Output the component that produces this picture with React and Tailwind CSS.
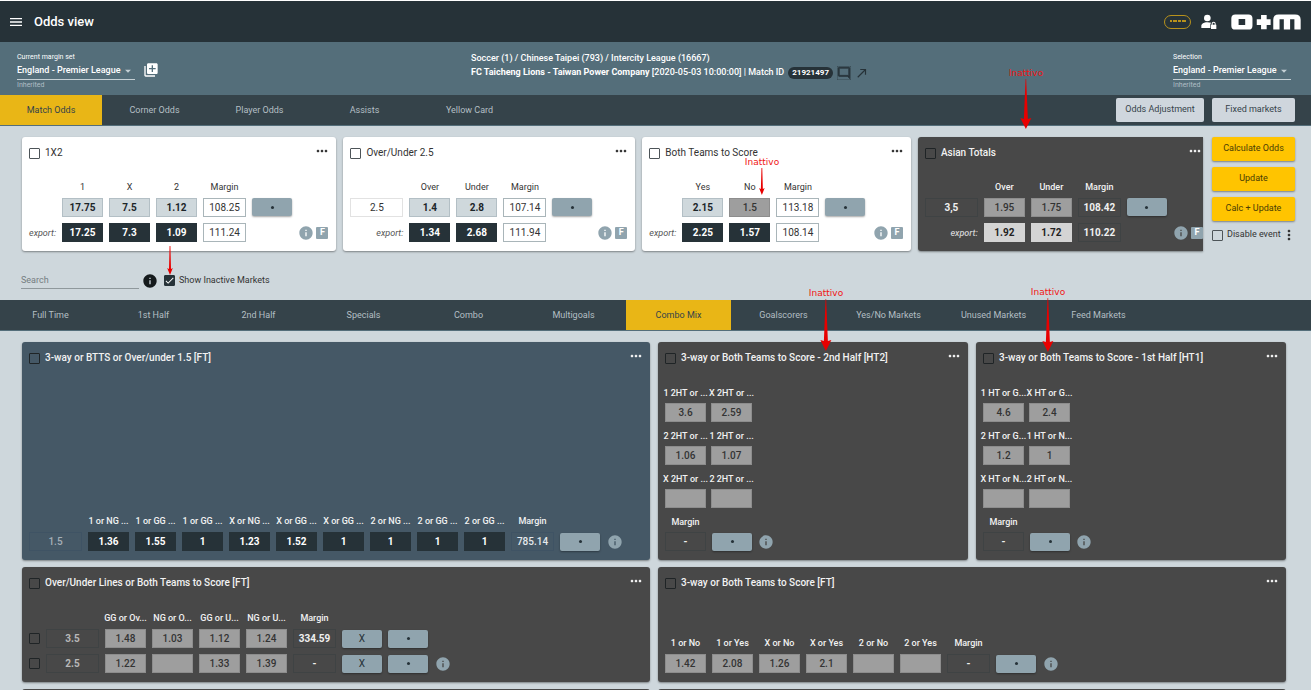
import React, { useState } from "react";
import {
  MdMenu,
  MdLibraryAdd,
  MdArrowDropDown,
  MdOutlineModeComment,
  MdCallMade,
  MdMoreHoriz,
  MdMoreVert,
  MdInfo,
  MdCheck,
} from "react-icons/md";

const CELL = {
  light: "border-[#b3bfc5] bg-[#cfd8dc] font-bold text-[#1c2529]",
  navy: "border-[#263238] bg-[#263238] font-bold text-white",
  grey: "border-[#8d8d8d] bg-[#9e9e9e] font-medium text-[#333333]",
  pale: "border-[#d4d4d4] bg-[#d4d4d4] font-bold text-[#222222]",
  white: "border-[#a9b5b9] bg-white text-[#333333]",
  line: "border-[#e2e2e2] bg-white text-[#333333]",
  dark: "border-[#3f4344] bg-transparent font-bold text-[#f0f0f0]",
  dim: "border-[#3f4344] bg-transparent font-bold text-[#b8b8b8]",
  blue: "border-[#3f5364] bg-transparent font-medium text-[#e6eaed]",
  blueDim: "border-[#3f5364] bg-transparent font-medium text-[#a5b0b8]",
};

function Cell({ value, tone, width = "w-[41px]", label }) {
  return (
    <input
      aria-label={label}
      defaultValue={value}
      className={`block h-[19px] border text-center text-[10px] leading-4 outline-none ${width} ${CELL[tone]}`}
    />
  );
}

function Check({ id, label, dark, defaultChecked = false }) {
  const [on, setOn] = useState(defaultChecked);
  return (
    <span className="relative flex size-[11px] shrink-0">
      <input
        id={id}
        type="checkbox"
        aria-label={label}
        checked={on}
        onChange={(e) => setOn(e.target.checked)}
        className={`size-[11px] appearance-none rounded-[1px] border checked:bg-[#263238] ${
          dark ? "border-[#1f2426]" : "border-[#4d5458] checked:border-[#263238]"
        }`}
      />
      {on && <MdCheck className="pointer-events-none absolute inset-0 size-[11px] text-white" />}
    </span>
  );
}

function ActionButton({ children }) {
  return (
    <button className="flex h-[18px] w-10 items-center justify-center rounded-[2px] bg-[#90a4ae] text-[10px] text-[#263238] shadow-[0_1px_2px_rgba(0,0,0,0.35)]">
      {children === "•" ? <span className="size-[3px] rounded-full bg-[#263238]" /> : children}
    </button>
  );
}

function InfoIcon() {
  return <MdInfo className="size-4 shrink-0 text-[#90a4ae]" />;
}

function FBadge() {
  return (
    <span className="flex size-3 shrink-0 items-center justify-center rounded-[1px] bg-[#90a4ae] text-[9px] font-bold text-white">
      F
    </span>
  );
}

function Card({ title, tone = "dark", clipped, className = "", children }) {
  const tones = {
    white: "bg-white text-[#333333]",
    dark: "bg-[#484848] text-[#f2f2f2]",
    blue: "bg-[#455866] text-[#f2f2f2]",
  };
  return (
    <section
      className={`flex min-w-0 flex-col justify-between overflow-hidden pb-[9px] pl-[7px] shadow-[0_1px_2px_rgba(0,0,0,0.4)] ${
        clipped ? "rounded-l-[3px]" : "rounded-[3px]"
      } ${tones[tone]} ${className}`}
    >
      <header className={`flex h-8 shrink-0 items-center gap-[5px] ${clipped ? "" : "pr-1.5"}`}>
        <Check label={title} dark={tone !== "white"} />
        <h2 className={`flex-1 whitespace-nowrap text-[10px] leading-4 ${tone === "white" ? "" : "font-medium"}`}>
          {title}
        </h2>
        <button aria-label={`${title} menu`} className="mb-1">
          <MdMoreHoriz className="size-4" />
        </button>
      </header>
      {children}
    </section>
  );
}

const TH = "h-[22px] p-0 pr-1.5 pb-[3px] align-bottom text-[9px] leading-4";

function TopMarket({ title, tone = "white", clipped, line, heads, odds, exported, margin, exportMargin, oddTones, className }) {
  const dark = tone === "dark";
  const marginTone = dark ? "dark" : "white";
  const weight = dark ? "font-medium" : "font-normal";
  return (
    <Card title={title} tone={tone} clipped={clipped} className={className}>
      <div className={`flex items-end justify-between ${clipped ? "" : "pr-2"}`}>
        <table className={`shrink-0 border-collapse text-center text-[9px] leading-4 ${weight}`}>
          <thead>
            <tr>
              <th className="p-0" />
              {heads.map((h) => (
                <th key={h} className={`${TH} ${weight}`}>{h}</th>
              ))}
              <th className={`${TH} ${weight}`}>Margin</th>
              <th className="p-0" />
            </tr>
          </thead>
          <tbody>
            <tr>
              <td className="p-0 pr-1.5 pb-1.5">
                {line !== undefined && (
                  <Cell value={line} label={`${title} line`} tone={dark ? "dark" : "line"} width="w-[53px]" />
                )}
              </td>
              {odds.map((v, i) => (
                <td key={i} className="p-0 pr-1.5 pb-1.5">
                  <Cell value={v} label={`${title} ${heads[i]}`} tone={oddTones[i]} />
                </td>
              ))}
              <td className="p-0 pr-1.5 pb-1.5">
                <Cell value={margin} label={`${title} margin`} tone={marginTone} width="w-[43px]" />
              </td>
              <td className="p-0 pb-[7px]">
                <ActionButton>•</ActionButton>
              </td>
            </tr>
            <tr>
              <td className={`p-0 pr-1.5 text-right italic ${dark ? "text-[#d0d0d0]" : "text-[#555555]"}`}>export:</td>
              {exported.map((v, i) => (
                <td key={i} className="p-0 pr-1.5">
                  <Cell value={v} label={`${title} ${heads[i]} export`} tone={dark ? "pale" : "navy"} />
                </td>
              ))}
              <td className="p-0 pr-1.5">
                <Cell value={exportMargin} label={`${title} export margin`} tone={marginTone} width="w-[43px]" />
              </td>
              <td />
            </tr>
          </tbody>
        </table>
        <div className="flex h-[19px] items-center gap-0.5">
          <InfoIcon />
          <FBadge />
        </div>
      </div>
    </Card>
  );
}

function LineMarket({ title, tone = "dark", cellTone = "grey", heads, rows, selectable, className }) {
  const blue = tone === "blue";
  const hasLine = rows[0].line !== undefined;
  return (
    <Card title={title} tone={tone} className={className}>
      <div className="flex items-end gap-px">
        <table className="border-collapse text-center">
          <thead>
            <tr>
              {selectable && <th className="p-0" />}
              {hasLine && <th className="p-0" />}
              {heads.map((h, i) => (
                <th key={i} className={`${TH} font-medium`}>
                  <span className="flex w-[41px] justify-center whitespace-nowrap">{h}</span>
                </th>
              ))}
              <th className={`${TH} font-medium`}>Margin</th>
            </tr>
          </thead>
          <tbody>
            {rows.map((r, n) => {
              const pb = n < rows.length - 1 ? "pb-1.5" : "pb-0";
              return (
                <tr key={n}>
                  {selectable && (
                    <td className={`p-0 pr-1.5 ${pb}`}>
                      <Check label={`${title} ${r.line}`} dark />
                    </td>
                  )}
                  {hasLine && (
                    <td className={`p-0 pr-1.5 ${pb}`}>
                      <Cell value={r.line} label={`${title} line`} tone={blue ? "blueDim" : "dim"} width="w-[53px]" />
                    </td>
                  )}
                  {r.odds.map((v, i) => (
                    <td key={i} className={`p-0 pr-1.5 ${pb}`}>
                      <Cell value={v} label={`${title} ${heads[i]}`} tone={cellTone} />
                    </td>
                  ))}
                  <td className={`p-0 pr-1.5 ${pb}`}>
                    <Cell value={r.margin} label={`${title} margin`} tone={blue ? "blue" : "dark"} width="w-[43px]" />
                  </td>
                  {r.actions.map((a) => (
                    <td key={a} className={`p-0 pr-1.5 ${pb}`}>
                      <ActionButton>{a}</ActionButton>
                    </td>
                  ))}
                </tr>
              );
            })}
          </tbody>
        </table>
        <div className="flex h-[19px] items-center">
          <InfoIcon />
        </div>
      </div>
    </Card>
  );
}

function PairMarket({ title, pairs }) {
  return (
    <Card title={title}>
      <div className="flex flex-col text-[9px] leading-4 font-medium">
        <div className="grid grid-cols-[41px_41px] gap-x-[5px]">
          {pairs.map(([name, value]) => (
            <label key={name} className="flex flex-col">
              <span className="flex h-6 items-center justify-center pt-1 whitespace-nowrap">{name}</span>
              <Cell value={value} label={name} tone="grey" />
            </label>
          ))}
        </div>
        <span className="flex h-6 w-[41px] items-center justify-center pt-1">Margin</span>
        <div className="flex items-center">
          <Cell value="-" label={`${title} margin`} tone="dark" />
          <div className="mr-1.5 ml-1.5">
            <ActionButton>•</ActionButton>
          </div>
          <InfoIcon />
        </div>
      </div>
    </Card>
  );
}

function Tabs({ items, initial, firstWidth, label, children }) {
  const [active, setActive] = useState(initial);
  return (
    <nav aria-label={label} className="flex h-[31px] shrink-0 items-center border-b border-[#546e7a] bg-[#35434a]">
      {items.map((t, i) => (
        <button
          key={t}
          onClick={() => setActive(t)}
          className={`h-full shrink-0 pt-0.5 text-[9px] ${i === 0 ? firstWidth : "w-[105px]"} ${
            active === t ? "bg-[#e9b616] text-[#35434a]" : "text-[#b4bfc4]"
          }`}
        >
          {t}
        </button>
      ))}
      {children}
    </nav>
  );
}

function MarginSelect({ id, label }) {
  return (
    <div className="flex w-[118px] flex-col text-white">
      <label htmlFor={id} className="text-[7px] leading-[10px]">{label}</label>
      <div className="relative flex items-center border-b border-[#c5d0d5]">
        <select id={id} className="h-[17px] w-full appearance-none bg-transparent text-[9px] font-medium outline-none">
          <option>England - Premier League</option>
        </select>
        <MdArrowDropDown className="pointer-events-none absolute right-0 size-3.5 text-[#c5d0d5]" />
      </div>
      <span className="text-[7px] leading-[11px] text-[#b0bec5]">Inherited</span>
    </div>
  );
}

function Logo() {
  return (
    <svg viewBox="752 42 212 48" className="h-4 w-[70px]" fill="#ffffff" aria-label="o+m">
      <path
        fillRule="evenodd"
        d="M765 43H805Q817 43 817 55V77Q817 89 805 89H765Q753 89 753 77V55Q753 43 765 43ZM775 57V75H795V57Z"
      />
      <path d="M843 45H860V58H872V75H860V88H843V75H830V58H843Z" />
      <path d="M880 89V59Q880 43 896 43H946Q963 43 963 59V89H944V58H931V89H912V58H899V89Z" />
    </svg>
  );
}

function UserLock() {
  return (
    <svg viewBox="0 0 48 48" className="h-4 w-4" fill="#ffffff" aria-label="Account">
      <circle cx="19" cy="12" r="10" />
      <path d="M19 25C8 25 1 30 1 36V42H28V31Q28 28 31 26Q25 25 19 25Z" />
      <path fillRule="evenodd" d="M32 32V29A6 6 0 0 1 44 29V32H46V45H30V32ZM35 32H41V29A3 3 0 0 0 35 29Z" />
    </svg>
  );
}

function Note({ className, arrowOnly, length }) {
  return (
    <div className={`pointer-events-none absolute z-10 flex -translate-x-1/2 flex-col items-center ${className}`}>
      {!arrowOnly && (
        <span className="font-['DejaVu_Sans',sans-serif] text-[9px] leading-3 text-[#f01414]">Inattivo</span>
      )}
      <svg width="14" height={length} viewBox={`0 0 14 ${length}`} fill="#e80000">
        <path
          d={
            length > 40
              ? `M6.7 0H7.3L9 ${length - 10}L12.5 ${length - 11}L7 ${length}L1.5 ${length - 11}L5 ${length - 10}Z`
              : `M6.6 0H7.4L8 ${length - 6}L9.8 ${length - 7}L7 ${length}L4.2 ${length - 7}L6 ${length - 6}Z`
          }
        />
      </svg>
    </div>
  );
}

export default function App() {
  return (
    <div className="relative flex h-screen flex-col overflow-hidden border-t border-white bg-[#ced7dc] font-[Roboto,'Liberation_Sans',sans-serif] text-[#333333]">
      <header className="flex h-[41px] shrink-0 items-center bg-[#263238] pr-2.5 pl-2 text-white">
        <button aria-label="Menu">
          <MdMenu className="size-4" />
        </button>
        <h1 className="ml-2.5 flex-1 text-[13px] font-medium">Odds view</h1>
        <div className="flex h-3.5 w-[27px] justify-center gap-px rounded-full border border-[#b8921c] pt-1">
          <span className="h-0.5 w-0.5 bg-[#b8921c]" />
          <span className="h-0.5 w-1 bg-[#b8921c]" />
          <span className="h-0.5 w-[3px] bg-[#b8921c]" />
          <span className="h-0.5 w-1 bg-[#b8921c]" />
        </div>
        <div className="mr-3.5 ml-2.5">
          <UserLock />
        </div>
        <Logo />
      </header>

      <div className="flex h-[53px] shrink-0 items-start bg-[#546e7a] pt-2.5 pr-5 pl-[17px]">
        <div className="flex w-[454px] items-start gap-2">
          <MarginSelect id="margin-set" label="Current margin set" />
          <button aria-label="Add margin set" className="mt-2.5 text-white">
            <MdLibraryAdd className="size-4" />
          </button>
        </div>
        <div className="flex flex-1 flex-col text-[9px] font-medium text-white">
          <p className="leading-3">Soccer (1) / Chinese Taipei (793) / Intercity League (16667)</p>
          <div className="mt-px flex h-4 items-center">
            <p>
              <strong className="font-bold">FC Taicheng Lions - Taiwan Power Company</strong> [2020-05-03 10:00:00] | Match ID
            </p>
            <span className="ml-1 flex h-3 items-center rounded-full bg-[#263238] px-1 text-[8px] font-bold">21921497</span>
            <MdOutlineModeComment className="ml-1 size-3.5 stroke-[#263238] stroke-1 text-[#263238]" />
            <MdCallMade className="ml-1 size-3.5 text-[#263238]" />
          </div>
        </div>
        <MarginSelect id="selection" label="Selection" />
      </div>

      <Tabs
        label="Match sections"
        items={["Match Odds", "Corner Odds", "Player Odds", "Assists", "Yellow Card"]}
        initial="Match Odds"
        firstWidth="w-[102px]"
      >
        <div className="ml-auto flex gap-2 pr-4 text-[9px] text-[#35434a]">
          <button className="h-6 w-[88px] rounded-[2px] bg-[#cfd6dd]">Odds Adjustment</button>
          <button className="h-6 w-[83px] rounded-[2px] bg-[#cfd6dd]">Fixed markets</button>
        </div>
      </Tabs>

      <div className="flex shrink-0 gap-[9px] pt-[11px] pr-4 pl-[22px]">
        <div className="flex h-[114px] min-w-0 flex-1 gap-[7px]">
          <TopMarket
            className="flex-[315_1_0px]"
            title="1X2"
            heads={["1", "X", "2"]}
            odds={["17.75", "7.5", "1.12"]}
            oddTones={["light", "light", "light"]}
            exported={["17.25", "7.3", "1.09"]}
            margin="108.25"
            exportMargin="111.24"
          />
          <TopMarket
            className="flex-[292_1_0px]"
            title="Over/Under 2.5"
            line="2.5"
            heads={["Over", "Under"]}
            odds={["1.4", "2.8"]}
            oddTones={["light", "light"]}
            exported={["1.34", "2.68"]}
            margin="107.14"
            exportMargin="111.94"
          />
          <TopMarket
            className="flex-[268_1_0px]"
            title="Both Teams to Score"
            heads={["Yes", "No"]}
            odds={["2.15", "1.5"]}
            oddTones={["light", "grey"]}
            exported={["2.25", "1.57"]}
            margin="113.18"
            exportMargin="108.14"
          />
          <TopMarket
            className="flex-[285_1_0px]"
            title="Asian Totals"
            tone="dark"
            clipped
            line="3,5"
            heads={["Over", "Under"]}
            odds={["1.95", "1.75"]}
            oddTones={["grey", "grey"]}
            exported={["1.92", "1.72"]}
            margin="108.42"
            exportMargin="110.22"
          />
        </div>
        <div className="flex w-[83px] shrink-0 flex-col gap-1.5 text-[9px] text-[#4a3d05]">
          <button className="h-6 rounded-[2px] bg-[#ffc400] shadow-[0_1px_2px_rgba(0,0,0,0.4)]">Calculate Odds</button>
          <button className="h-6 rounded-[2px] bg-[#ffc400] shadow-[0_1px_2px_rgba(0,0,0,0.4)]">Update</button>
          <button className="h-6 rounded-[2px] bg-[#ffc400] shadow-[0_1px_2px_rgba(0,0,0,0.4)]">Calc + Update</button>
          <div className="flex items-center text-[#333333]">
            <Check id="disable-event" label="Disable event" />
            <label htmlFor="disable-event" className="ml-1 whitespace-nowrap">Disable event</label>
            <button aria-label="More" className="-mr-2">
              <MdMoreVert className="size-4" />
            </button>
          </div>
        </div>
      </div>

      <div className="flex h-[49px] shrink-0 items-center pt-2.5 pl-[21px]">
        <input
          aria-label="Search"
          placeholder="Search"
          className="h-[17px] w-[118px] border-b border-[#8f989c] bg-transparent text-[9px] outline-none placeholder:text-[#757d81]"
        />
        <MdInfo className="mr-1.5 ml-[3px] size-4 text-[#151a1c]" />
        <Check id="inactive" label="Show Inactive Markets" defaultChecked />
        <label htmlFor="inactive" className="ml-1 text-[9px]">Show Inactive Markets</label>
      </div>

      <Tabs
        label="Market groups"
        items={[
          "Full Time",
          "1st Half",
          "2nd Half",
          "Specials",
          "Combo",
          "Multigoals",
          "Combo Mix",
          "Goalscorers",
          "Yes/No Markets",
          "Unused Markets",
          "Feed Markets",
        ]}
        initial="Combo Mix"
        firstWidth="w-[101px]"
      />

      <main className="grid min-h-0 flex-1 auto-rows-[115px] grid-cols-4 grid-rows-[218px] gap-x-2 gap-y-[7px] pt-[11px] pr-[25px] pl-[22px]">
        <LineMarket
          className="col-span-2"
          title="3-way or BTTS or Over/under 1.5 [FT]"
          tone="blue"
          cellTone="navy"
          heads={["1 or NG ...", "1 or GG ...", "1 or GG ...", "X or NG ...", "X or GG ...", "X or GG ...", "2 or NG ...", "2 or GG ...", "2 or GG ..."]}
          rows={[
            {
              line: "1.5",
              odds: ["1.36", "1.55", "1", "1.23", "1.52", "1", "1", "1", "1"],
              margin: "785.14",
              actions: ["•"],
            },
          ]}
        />
        <PairMarket
          title="3-way or Both Teams to Score - 2nd Half [HT2]"
          pairs={[
            ["1 2HT or ...", "3.6"],
            ["X 2HT or ...", "2.59"],
            ["2 2HT or ...", "1.06"],
            ["1 2HT or ... ", "1.07"],
            ["X 2HT or ... ", ""],
            ["2 2HT or ... ", ""],
          ]}
        />
        <PairMarket
          title="3-way or Both Teams to Score - 1st Half [HT1]"
          pairs={[
            ["1 HT or G...", "4.6"],
            ["X HT or G...", "2.4"],
            ["2 HT or G...", "1.2"],
            ["1 HT or N...", "1"],
            ["X HT or N...", ""],
            ["2 HT or N...", ""],
          ]}
        />
        <LineMarket
          className="col-span-2"
          title="Over/Under Lines or Both Teams to Score [FT]"
          selectable
          heads={["GG or Ov...", "NG or O...", "GG or U...", "NG or U..."]}
          rows={[
            { line: "3.5", odds: ["1.48", "1.03", "1.12", "1.24"], margin: "334.59", actions: ["X", "•"] },
            { line: "2.5", odds: ["1.22", "", "1.33", "1.39"], margin: "-", actions: ["X", "•"] },
          ]}
        />
        <LineMarket
          className="col-span-2"
          title="3-way or Both Teams to Score [FT]"
          heads={["1 or No", "1 or Yes", "X or No", "X or Yes", "2 or No", "2 or Yes"]}
          rows={[{ odds: ["1.42", "2.08", "1.26", "2.1", "", ""], margin: "-", actions: ["•"] }]}
        />
        <div className="col-span-2 rounded-[3px] bg-[#484848]" />
        <div className="col-span-2 rounded-[3px] bg-[#484848]" />
      </main>

      <Note className="top-[66px] left-[1026px]" length={50} />
      <Note className="top-[155px] left-[762px]" length={27} />
      <Note className="top-[245px] left-[170px]" arrowOnly length={29} />
      <Note className="top-[286px] left-[826px]" length={52} />
      <Note className="top-[285px] left-[1048px]" length={54} />
    </div>
  );
}
